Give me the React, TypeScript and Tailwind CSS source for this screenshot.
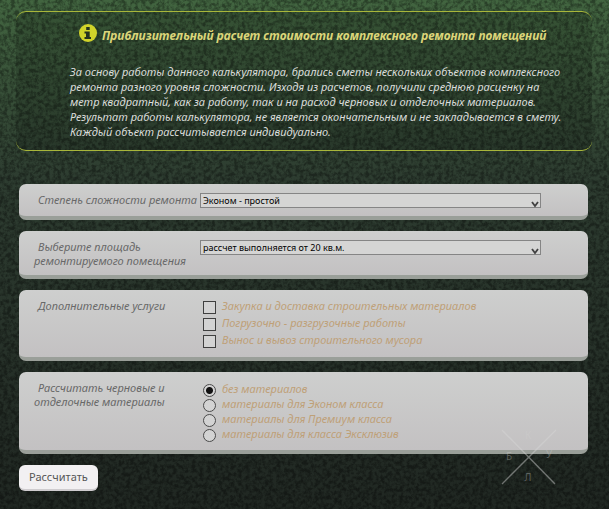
import {FC, memo, PropsWithChildren, useState} from 'react';

const services = [
  {id: 'delivery', label: 'Закупка и доставка строительных материалов'},
  {id: 'loading', label: 'Погрузочно - разгрузочные работы'},
  {id: 'garbage', label: 'Вынос и вывоз строительного мусора'},
];

const materials = [
  {id: 'none', label: 'без материалов'},
  {id: 'econom', label: 'материалы для Эконом класса'},
  {id: 'premium', label: 'материалы для Премиум класса'},
  {id: 'exclusive', label: 'материалы для класса Эксклюзив'},
];

const Texture: FC = memo(() => (
  <svg aria-hidden="true" className="pointer-events-none absolute inset-0 -z-10 h-full w-full">
    <filter id="leaves">
      <feTurbulence baseFrequency="0.26" numOctaves="3" seed="4" type="fractalNoise" />
      <feColorMatrix values="0 0 0 0 0  0 0 0 0 0  0 0 0 0 0  3 0 0 0 -1.1" />
    </filter>
    <rect filter="url(#leaves)" height="100%" opacity="0.35" width="100%" />
  </svg>
));

const Watermark: FC = memo(() => (
  <svg
    aria-hidden="true"
    className="pointer-events-none absolute right-[50px] bottom-[22px] h-[60px] w-[60px]"
    viewBox="0 0 60 60">
    <path d="M3 3 56 57M57 3 3 57" stroke="#d8d8d8" strokeOpacity="0.45" strokeWidth="1.4" />
    <g className="font-[Noto_Sans,sans-serif]" fill="#d0d0d0" fillOpacity="0.35" fontSize="10" textAnchor="middle">
      <text x="10" y="33">Б</text>
      <text x="50" y="31">У</text>
      <text x="29" y="54">Л</text>
      <text x="29" y="12">К</text>
    </g>
  </svg>
));

const Panel: FC<PropsWithChildren<{className: string}>> = ({className, children}) => (
  <div
    className={`flex items-start rounded-[7px] border-b-4 border-[#9a9f99] bg-linear-to-b from-[#cecfce] to-[#c3c1c2] pl-[15px] ${className}`}>
    {children}
  </div>
);

const labelStyle = 'w-[166px] shrink-0 indent-1 text-[11px] leading-[14px] text-[#686868] italic';

const Select: FC<{id: string; options: string[]}> = ({id, options}) => (
  <div className="relative mr-[47px] flex-1">
    <select
      className="block h-[15px] w-full appearance-none border border-[#858585] bg-[#d5d5d4] pr-4 pl-[2px] text-[9px] leading-[13px] text-black"
      id={id}>
      {options.map(option => (
        <option key={option}>{option}</option>
      ))}
    </select>
    <svg className="pointer-events-none absolute right-[2px] bottom-0 h-2 w-2" fill="none" viewBox="0 0 8 8">
      <path d="M1 2 4 6 7 2" stroke="#414141" strokeWidth="1.8" />
    </svg>
  </div>
);

const App: FC = () => {
  const [material, setMaterial] = useState('none');

  return (
    <div className="relative isolate min-h-screen bg-linear-to-b from-[#426540] via-[#2d3c30] via-35% to-[#202722] pt-[11px] pb-[18px] font-[Noto_Sans,sans-serif]">
      <Texture />
      <header className="mr-[17px] ml-4 rounded-[10px] border-y border-[#a8b63a] bg-black/15 pt-[11px] pr-4 pb-[11px] pl-[54px]">
        <h1 className="flex h-[21px] items-center gap-1 pl-2 text-[12px] leading-[21px] font-bold whitespace-nowrap text-[#dbd579] italic">
          <svg aria-hidden="true" className="h-5 w-5 shrink-0" viewBox="0 0 20 20">
            <circle cx="10" cy="9" fill="#d1d32a" r="9" />
            <path d="M8.2 3h3.5v3H8.2zM6.5 7.5h5.2V13H13v2H6.5v-2H8V9.5H6.5z" fill="#26331f" />
          </svg>
          <span className="pt-1">Приблизительный расчет стоимости комплексного ремонта помещений</span>
        </h1>
        <p className="pt-5 text-[11px] leading-[15px] whitespace-nowrap text-[#dadcda] italic">
          За основу работы данного калькулятора, брались сметы нескольких объектов комплексного
          <br />
          ремонта разного уровня сложности. Изходя из расчетов, получили среднюю расценку на
          <br />
          метр квадратный, как за работу, так и на расход черновых и отделочных материалов.
          <br />
          Результат работы калькулятора, не является окончательным и не закладывается в смету.
          <br />
          Каждый объект рассчитывается индивидуально.
        </p>
      </header>

      <form className="mt-[33px] mr-[21px] ml-[19px] flex flex-col gap-[11px]" onSubmit={e => e.preventDefault()}>
        <Panel className="h-9 pt-[9px]">
          <label className={`${labelStyle} whitespace-nowrap`} htmlFor="level">
            Степень сложности ремонта
          </label>
          <Select id="level" options={['Эконом - простой']} />
        </Panel>
        <Panel className="h-12 pt-[9px]">
          <label className={labelStyle} htmlFor="area">
            Выберите площадь
            <br />
            ремонтируемого помещения
          </label>
          <Select id="area" options={['рассчет выполняется от 20 кв.м.']} />
        </Panel>
        <Panel className="h-[71px] pt-[9px]">
          <p className={labelStyle}>Дополнительные услуги</p>
          <div className="flex flex-col pl-[3px]">
            {services.map(({id, label}) => (
              <label className="flex h-[17px] items-center gap-[6px] text-[11px] text-[#bfa077] italic" key={id}>
                <input
                  className="h-[13px] w-[13px] appearance-none border border-[#3f3f3f] bg-[#d3d3d3] checked:bg-[#3f3f3f]"
                  type="checkbox"
                />
                <span className="pb-[2px]">{label}</span>
              </label>
            ))}
          </div>
        </Panel>
        <Panel className="h-[82px] pt-[9px]">
          <p className={labelStyle}>
            Рассчитать черновые и
            <br />
            отделочные материалы
          </p>
          <div className="flex flex-col pt-[2px] pl-[3px]">
            {materials.map(({id, label}) => (
              <label className="flex h-[15px] items-center gap-[6px] text-[11px] text-[#bfa077] italic" key={id}>
                <input
                  checked={material === id}
                  className="h-[13px] w-[13px] appearance-none rounded-full border border-[#4a4a4a] bg-[#d3d3d3] checked:bg-[radial-gradient(circle,#111_3px,#d3d3d3_4px)]"
                  name="material"
                  onChange={() => setMaterial(id)}
                  type="radio"
                />
                <span className="pb-[2px]">{label}</span>
              </label>
            ))}
          </div>
        </Panel>
        <button
          className="h-[26px] self-start rounded-md border-b-2 border-[#cfcccf] bg-[#f2f0f2] px-[10px] text-[11px] text-[#555]"
          type="submit">
          Рассчитать
        </button>
      </form>
      <Watermark />
    </div>
  );
};

export default App;
